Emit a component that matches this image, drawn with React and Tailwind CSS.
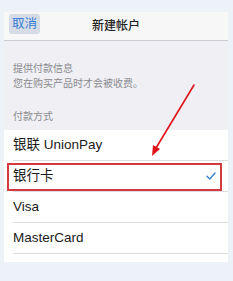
import React from 'react';

const font = { fontFamily: '"Liberation Sans", "Noto Sans CJK SC", sans-serif' };

const rows = ['银联 UnionPay', '银行卡', 'Visa', 'MasterCard'];

const Check = () => (
  <svg width="10" height="8" viewBox="0 0 10 8" fill="none">
    <path d="M1 4.2 L3.8 7 L9 1" stroke="#3a82d0" strokeWidth="1.4" strokeLinecap="round" strokeLinejoin="round" />
  </svg>
);

export default function App() {
  return (
    <div className="relative w-[233px] h-[281px] bg-[#edf2f8] pt-[12px] pl-[4px] overflow-hidden" style={font}>
      <div className="w-[224px] bg-[#efeff4]">
        {/* Nav bar */}
        <div className="relative h-[29px] bg-[#f7f7f8] border-b border-[#c9ccd2] flex items-center justify-center">
          <div className="absolute left-[5px] top-[2px] h-[20px] w-[31px] rounded-[3px] bg-[#d5dce5] flex items-center justify-center text-[12.5px] text-[#3a7dd6]">
            取消
          </div>
          <span className="text-[12px] font-medium text-[#222]">新建帐户</span>
        </div>

        {/* Info section */}
        <div className="pl-[9px] pt-[20px] text-[10px] leading-[15px] text-[#8a8a8f]">
          <div>提供付款信息</div>
          <div>您在购买产品时才会被收费。</div>
          <div className="mt-[18px] pb-[6px]">付款方式</div>
        </div>

        {/* Payment list */}
        <div className="relative bg-white pb-[8px]">
          {rows.map((r, i) => (
            <div key={r} className="pl-[9px]">
              <div className="h-[31px] flex items-center justify-between pr-[12px] border-b border-[#dedee2] text-[13.5px] text-[#1a1a1a]">
                <span>{r}</span>
                {i === 1 && <Check />}
              </div>
            </div>
          ))}
          <div className="absolute left-[3px] top-[33px] w-[215px] h-[28px] border-2 border-[#d33a40]" />
        </div>
      </div>

      {/* Red arrow */}
      <svg className="absolute left-0 top-0" width="233" height="281" viewBox="0 0 233 281">
        <line x1="194" y1="85" x2="156" y2="148" stroke="#e0141c" strokeWidth="1.6" strokeLinecap="round" />
        <polygon points="152,156 153,145 160,149" fill="#e0141c" />
      </svg>
    </div>
  );
}
